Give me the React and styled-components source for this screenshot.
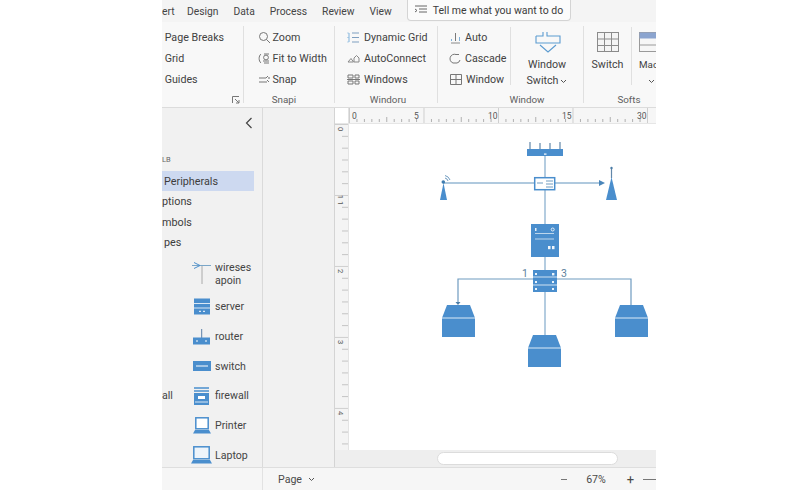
import React from "react";
import styled, { createGlobalStyle } from "styled-components";

const Global = createGlobalStyle`
  html, body { margin: 0; padding: 0; background: #fff; }
  body { font-family: Roboto, "Noto Sans", sans-serif; color: #3a3a3a; overflow: hidden; }
`;
const Frame = styled.div`
  margin-left: 162px; width: 494px; height: 490px; display: flex; flex-direction: column;
  overflow: hidden; background: #f5f5f5; font-size: 10.7px;
`;
const TabBar = styled.div`
  height: 22px; display: flex; align-items: center; gap: 15px; background: #f4f4f4; flex: none; font-size: 10.3px; color: #444;
`;
const TabStub = styled.span`
  width: 10px; flex: none;
`;
const TellBox = styled.div`
  height: 21px; align-self: flex-start; box-sizing: border-box; width: 164px; flex: none; display: flex; align-items: center; gap: 6px;
  padding-left: 7px; background: #fbfbfb; border: 1px solid #d4d4d4; border-top: none; border-radius: 0 0 4px 4px; font-size: 10.5px; white-space: nowrap; color: #3c3c3c;
  svg { flex: none; }
`;
const Ribbon = styled.div`
  height: 86px; flex: none; display: flex; background: #f8f8f8; border-bottom: 1px solid #dcdcdc; box-sizing: border-box; overflow: hidden;
`;
const Group = styled.div`
  width: ${p => p.$w}px; height: 77px; flex: none; display: flex; flex-direction: column; box-sizing: border-box; margin-top: 4px;
  border-right: ${p => (p.$last ? "none" : "1px solid #e0e0e0")};
  padding-left: ${p => p.$pad || 0}px;
`;
const GroupBody = styled.div`
  height: 64px; flex: none; display: flex; padding-top: 1px; box-sizing: border-box;
`;
const Stack = styled.div`
  display: flex; flex-direction: column; width: ${p => (p.$w ? p.$w + "px" : "auto")}; flex: none;
`;
const ToolRow = styled.div`
  height: 21px; flex: none; display: flex; align-items: center; gap: ${p => p.$gap ?? 3}px; white-space: nowrap; color: #424242;
  svg { flex: none; }
`;
const GroupLabel = styled.div`
  height: 17px; flex: none; margin-top: 1px; display: flex; align-items: center; justify-content: ${p => p.$end ? "flex-end" : "center"};
  padding-left: ${p => p.$pad || 0}px; padding-right: ${p => p.$end ? 3 : p.$padR || 0}px; font-size: 9.8px; color: #606060;
`;
const BigDivider = styled.div`
  width: 1px; height: 58px; background: #e0e0e0; flex: none;
`;
const BigButton = styled.div`
  display: flex; flex-direction: column; align-items: ${p => p.$start ? "flex-start" : "center"}; width: ${p => p.$w}px; flex: none; white-space: nowrap; color: #424242;
  padding-left: ${p => p.$pad || 0}px;
  svg { display: block; }
`;
const BigIcon = styled.div`
  height: 27px; flex: none; display: flex; align-items: center; justify-content: center; margin: 1px 0 2px; padding-left: ${p => p.$pad || 0}px;
`;
const BigText = styled.div`
  height: 16px; flex: none; line-height: 16px; display: flex; align-items: center; gap: 2px; padding-left: ${p => p.$pad || 0}px;
  font-size: ${p => p.$tight ? "9.8px" : "inherit"};
`;
const Main = styled.div`
  flex: 1; min-height: 0; display: flex; border-bottom: 1px solid #dedede;
`;
const Sidebar = styled.aside`
  width: 101px; flex: none; box-sizing: border-box; border-right: 1px solid #dadada; background: #f1f1f1; overflow: hidden; display: flex; flex-direction: column;
`;
const SideHead = styled.div`
  height: 44px; flex: none; display: flex; justify-content: flex-end; align-items: flex-start; padding: 9px 9px 0 0; box-sizing: border-box;
`;
const SectionCaption = styled.div`
  height: 16px; line-height: 16px; font-size: 7.5px; color: #666; flex: none;
`;
const NavRow = styled.div`
  height: ${p => (p.$active ? 20 : 20.5)}px; line-height: 22px; width: 92px; flex: none; font-size: 10.8px; white-space: nowrap; padding-left: ${p => p.$in || 0}px; box-sizing: border-box;
  background: ${p => (p.$active ? "#cdd9f0" : "transparent")}; color: #3d3d3d;
  margin-top: ${p => p.$top || 0}px;
`;
const ShapeList = styled.div`
  display: flex; flex-direction: column; margin-top: 3.5px;
`;
const ShapeRow = styled.div`
  height: ${p => p.$h || 29.7}px; flex: none; display: grid; grid-template-columns: 26px 27px 1fr; align-items: center; font-size: 10.6px; color: #444; line-height: 13px;
`;
const ShapeIcon = styled.div`
  display: flex; justify-content: center; align-items: center; grid-column: 2;
`;
const Pane = styled.div`
  width: 71px; flex: none; background: #f1f1f1; border-right: 1px solid #d4d4d4;
`;
const Work = styled.div`
  flex: 1; min-width: 0; display: flex; flex-direction: column;
`;
const TopRulerRow = styled.div`
  height: 16px; box-sizing: border-box; flex: none; display: flex; background: #f6f6f6; border-bottom: 1px solid #e6e6e6; overflow: hidden;
`;
const Corner = styled.div`
  width: 14px; flex: none; background: #fff; border-right: 1px solid #e2e2e2; box-sizing: border-box;
`;
const CanvasRow = styled.div`
  flex: 1; min-height: 0; display: flex;
`;
const LeftRuler = styled.div`
  width: 14px; flex: none; background: #f4f4f4; border-right: 1px solid #e4e4e4; box-sizing: border-box; overflow: hidden;
`;
const Page = styled.div`
  flex: 1; background: #fff; overflow: hidden;
`;
const ScrollTrack = styled.div`
  height: 17px; flex: none; background: #eeeeee; display: flex; align-items: center; padding-left: 102px;
`;
const ScrollThumb = styled.div`
  width: 181px; height: 13px; background: #fff; border: 1px solid #dcdcdc; border-radius: 7px; box-sizing: border-box;
`;
const StatusBar = styled.div`
  height: 22px; flex: none; display: flex; align-items: center; background: #f6f6f6; font-size: 10.6px; color: #4a4a4a;
`;
const StatusSpacer = styled.div`
  width: 100px; height: 100%; border-right: 1px solid #e2e2e2; flex: none;
`;
const PageMenu = styled.div`
  margin-left: 15px; display: flex; align-items: center; gap: 6px; width: 283px; flex: none;
`;
const Zoomer = styled.div`
  display: flex; align-items: center; white-space: nowrap;
`;
const ZoomBar = styled.span`
  width: ${p => p.$w}px; height: 1px; background: #777; flex: none; margin-left: ${p => p.$ml || 0}px;
`;
const ZoomValue = styled.span`
  width: 30px; text-align: center; margin: 0 15px 0 14px;
`;
const PlusSign = styled.span`
  font-size: 13px; width: 9px; text-align: center;
`;
const Line = ({ d, c = "#8a8a8a", w = 1 }) => <path d={d} fill="none" stroke={c} strokeWidth={w} />;

const I = ({ children, w = 13, h = 13 }) => <svg width={w} height={h} viewBox={`0 0 ${w} ${h}`}>{children}</svg>;
const ZoomIc = () => <I><circle cx="5.5" cy="5.5" r="4" fill="none" stroke="#777" /><Line d="M8.5 8.5L12 12" c="#777" /></I>;
const FitIc = () => <I><Line d="M3 2C0.5 4 0.5 9 3 11" c="#777" /><Line d="M6 2h5M6 11h5" c="#777" /><circle cx="8" cy="5.5" r="2.4" fill="none" stroke="#777" /><Line d="M5 9h6" c="#777" /></I>;
const SnapIc = () => <I><Line d="M1 5h7l2-2M1 9h8M9 7l2 2" c="#777" /><circle cx="11" cy="5" r="1" fill="#999" /></I>;
const GridIc = () => <I><Line d="M2 2v9" c="#7fb2dc" /><Line d="M5 2h7M5 6.5h7M5 11h7" c="#7f9fc0" /><Line d="M0.5 2h1M0.5 6.5h1M0.5 11h1" c="#7fb2dc" /></I>;
const ConnectIc = () => <I><path d="M1 10L4 6.5L6.5 10Z" fill="none" stroke="#888" /><path d="M7 10V6L9.5 3.5L12 6V10Z" fill="none" stroke="#888" /></I>;
const WindowsIc = () => <I><Line d="M1 2h5v3H1zM8 2h4v3H8zM1 8h5v3H1zM8 8h4v3H8zM0 6.5h13" c="#777" /></I>;
const AutoIc = () => <I><Line d="M2 12h9" c="#8a8a8a" /><Line d="M6.5 2v8" c="#7a7a7a" /><Line d="M2.5 8v2M10.5 6v4" c="#7fb2dc" /></I>;
const CascadeIc = () => <I><path d="M10 2.5H7A4.5 4.5 0 0 0 4 11H8A4 4 0 0 0 11 8" fill="none" stroke="#777" /></I>;
const WinIc = () => <I w={14}><Line d="M1.5 1.5h11v10h-11zM7 1.5v5M1.5 6.5h11M7 6.5v5" c="#777" /></I>;
const Chev = ({ c = "#555" }) => <svg width="7" height="5" viewBox="0 0 7 5"><Line d="M1 1l2.5 2.5L6 1" c={c} /></svg>;
const WindowBig = () => (
  <svg width="28" height="24" viewBox="0 0 28 24">
    <path d="M1 6H8V2M12 2V6H25V13H1V6" fill="none" stroke="#5b9bd0" strokeWidth="1.1" />
    <path d="M5 15L13 22L21 15" fill="none" stroke="#5b9bd0" strokeWidth="1.1" />
  </svg>
);
const TableBig = () => (
  <svg width="22" height="20" viewBox="0 0 22 20">
    <rect x=".5" y=".5" width="21" height="19" fill="#f4f4f4" stroke="#8b8b8b" />
    <path d="M.5 7H21.5M.5 13.5H21.5M7.5 .5V19.5M14.5 .5V19.5" stroke="#8b8b8b" fill="none" />
  </svg>
);
const TableHead = () => (
  <svg width="24" height="20" viewBox="0 0 24 20">
    <rect x=".5" y=".5" width="23" height="19" fill="#f6f6f6" stroke="#9a9a9a" />
    <rect x=".5" y=".5" width="23" height="6" fill="#8ba4cf" />
    <path d="M.5 13H23.5" stroke="#9a9a9a" />
  </svg>
);

const B = "#4a8ecd";
const ServerS = () => <svg width="18" height="17" viewBox="0 0 18 17"><rect width="16" height="16" x="1" y=".5" fill={B} /><path d="M1 5.5h16M1 10h16" stroke="#fff" strokeWidth=".8" /><path d="M6 13.3h2M10 13.3h2" stroke="#fff" /></svg>;
const RouterS = () => <svg width="20" height="16" viewBox="0 0 20 16"><path d="M9.7 0v9" stroke="#5b7fa8" /><rect y="8.5" x="1" width="17" height="7" fill={B} /><path d="M4 12h2M13 12h2" stroke="#fff" /></svg>;
const SwitchS = () => <svg width="20" height="10" viewBox="0 0 20 10"><rect x="1" width="18" height="10" fill={B} /><path d="M4 5h12" stroke="#fff" /></svg>;
const FirewallS = () => <svg width="17" height="18" viewBox="0 0 17 18"><path d="M1 1h15M1 4h15" stroke={B} strokeWidth="1.5" /><rect x="1" y="6" width="15" height="12" fill={B} /><rect x="5" y="9" width="7" height="3" fill="#fff" /><path d="M2 15h13" stroke="#fff" strokeWidth=".8" /></svg>;
const PrinterS = () => <svg width="18" height="17" viewBox="0 0 18 17"><rect x="2.8" y=".8" width="12.4" height="11" fill="#fff" stroke={B} strokeWidth="1.5" /><path d="M0 16.5L2 13H16L18 16.5Z" fill={B} /></svg>;
const LaptopS = () => <svg width="21" height="18" viewBox="0 0 21 18"><rect x="2.8" y=".8" width="15.4" height="12" fill="#eef4fa" stroke={B} strokeWidth="1.5" /><path d="M0 17.5L2 14H19L21 17.5Z" fill={B} /></svg>;
const ApS = () => <svg width="20" height="24" viewBox="0 0 20 24"><path d="M0 3.5H19" stroke="#7aa6c8" /><path d="M2 0.5L8 3.5L2 6.5" fill="none" stroke="#4a8ecd" /><path d="M10 4V22" stroke="#aaa" /></svg>;

const TopRuler = () => {
  const ticks = [];
  for (let i = 0; i < 41; i++) {
    const x = i * 7.45;
    const major = i % 10 === 0;
    const mid = i % 5 === 0;
    ticks.push(<path key={i} d={`M${x + .5} ${major ? 0 : mid ? 9 : 11}V${major ? 15 : 14}`} stroke={major ? "#cfcfcf" : "#b0b0b0"} />);
  }
  const labels = [["0", 3], ["5", 65], ["10", 139], ["15", 213], ["30", 288]];
  return (
    <svg width="307" height="15" viewBox="0 0 307 15">
      {ticks}
      {labels.map(([t, x]) => <text key={t} x={x} y="11" fontSize="8.5" fontFamily="Roboto" fill="#555">{t}</text>)}
    </svg>
  );
};
const LeftRulerDraw = () => {
  const ticks = [];
  for (let i = 0; i < 28; i++) {
    const y = i * 11.83 + .5;
    const major = i % 6 === 0;
    ticks.push(<path key={i} d={`M${major ? 0 : 7} ${y}H14`} stroke={major ? "#cfcfcf" : "#c4c4c4"} />);
  }
  const labels = [["0", 5], ["1 1", 76], ["2", 147], ["3", 218], ["4", 289]];
  return (
    <svg width="13" height="326" viewBox="0 0 13 326">
      {ticks}
      {labels.map(([t, y]) => <text key={t} transform={`translate(3 ${y}) rotate(90)`} textAnchor="middle" fontSize="7.5" fontFamily="Roboto" fill="#555">{t}</text>)}
    </svg>
  );
};

/* Diagram coordinates: page x-349, y-124 */
const X = (x) => x - 349;
const Y = (y) => y - 124;
const Cabinet = ({ x, y }) => (
  <g transform={`translate(${X(x)} ${Y(y)})`}>
    <path d="M5 0H28L33 13V32H0V13Z" fill={B} />
    <path d="M0 13H33" stroke="#dcebf7" strokeWidth="1" />
  </g>
);
const Diagram = () => (
  <svg width="307" height="326" viewBox="0 0 307 326" style={{ display: "block" }}>
    <g stroke="#94b7d3" strokeWidth="1.4" fill="none">
      <path d={`M${X(545)} ${Y(156)}V${Y(335)}`} />
      <path d={`M${X(443)} ${Y(183)}H${X(603)}`} />
    </g>
    <g stroke="#6f9bc0" strokeWidth="1.2" fill="none">
      <path d={`M${X(533)} ${Y(279)}H${X(458)}V${Y(304)}`} />
      <path d={`M${X(557)} ${Y(279)}H${X(631)}V${Y(305)}`} />
    </g>
    <path d={`M${X(455.5)} ${Y(302)}h5l-2.5 3z`} fill="#4d7ea8" />
    <path d={`M${X(599)} ${Y(180)}l6 3l-6 3z`} fill="#4a86ba" />
    <rect x={X(527)} y={Y(149)} width="36" height="7" fill={B} />
    <path d={`M${X(530)} ${Y(142)}V${Y(149)}M${X(540)} ${Y(143)}V${Y(149)}M${X(550)} ${Y(143)}V${Y(149)}M${X(560)} ${Y(142)}V${Y(149)}`} stroke="#6287a9" strokeWidth="1.2" />
    <rect x={X(544)} y={Y(153.5)} width="2.5" height="1.2" fill="#fff" />
    <rect x={X(534.7)} y={Y(177.7)} width="20" height="12" fill="#fff" stroke={B} strokeWidth="1.5" />
    <path d={`M${X(537)} ${Y(183)}H${X(543)}M${X(546)} ${Y(181)}H${X(553)}M${X(546)} ${Y(184)}H${X(553)}M${X(546)} ${Y(187)}H${X(553)}`} stroke="#6f9bc0" />
    <path d={`M${X(443.5)} ${Y(183)}L${X(447)} ${Y(200)}H${X(440)}Z`} fill={B} />
    <circle cx={X(443.3)} cy={Y(182)} r="1.8" fill="#3f7caf" />
    <path d={`M${X(445)} ${Y(178)}A4 4 0 0 1 ${X(448)} ${Y(181)}M${X(445)} ${Y(175.5)}A7 7 0 0 1 ${X(450)} ${Y(180)}`} stroke="#6f9bc0" fill="none" />
    <path d={`M${X(611.5)} ${Y(177)}L${X(617)} ${Y(200)}H${X(606)}Z`} fill={B} />
    <path d={`M${X(611.5)} ${Y(168)}V${Y(178)}`} stroke="#6287a9" strokeWidth="1.2" />
    <circle cx={X(611.5)} cy={Y(168)} r="1.2" fill="#4a7ca6" />
    <rect x={X(531)} y={Y(224)} width="28" height="33" fill={B} />
    <path d={`M${X(535)} ${Y(233.5)}H${X(554)}M${X(535)} ${Y(239)}H${X(554)}`} stroke="#bcd6ec" strokeWidth="1" />
    <rect x={X(535)} y={Y(228)} width="1.5" height="3" fill="#e6f0f9" />
    <circle cx={X(552.7)} cy={Y(229.5)} r="1.5" fill="none" stroke="#e6f0f9" />
    <rect x={X(548)} y={Y(246)} width="2.5" height="3.2" fill="#f1f6fb" />
    <rect x={X(552)} y={Y(246)} width="2.5" height="3.2" fill="#f1f6fb" />
    <rect x={X(533)} y={Y(270)} width="24" height="22" fill={B} />
    <path d={`M${X(533)} ${Y(277)}H${X(557)}M${X(533)} ${Y(285)}H${X(557)}`} stroke="#cfe2f2" />
    <g fill="#eaf3fb">
      <rect x={X(535)} y={Y(273)} width="2" height="2" />
      <rect x={X(552)} y={Y(273)} width="2.4" height="2.4" />
      <rect x={X(535)} y={Y(281)} width="2" height="2" />
      <rect x={X(552)} y={Y(281)} width="2" height="2" />
      <rect x={X(535)} y={Y(288)} width="2" height="2" />
      <rect x={X(552)} y={Y(288)} width="2" height="2" />
    </g>
    <Cabinet x={442} y={305} />
    <Cabinet x={528} y={335} />
    <Cabinet x={615} y={305} />
    <text x={X(522)} y={Y(277)} fontSize="10.5" fontFamily="Roboto" fill="#5d7f9c">1</text>
    <text x={X(561)} y={Y(277)} fontSize="10.5" fontFamily="Roboto" fill="#5d7f9c">3</text>
  </svg>
);

export default function App() {
  return (
    <>
      <Global />
      <Frame>
        <TabBar>
          <TabStub>ert</TabStub>
          <span>Design</span><span>Data</span><span>Process</span><span>Review</span><span>View</span>
          <TellBox>
            <svg width="12" height="10" viewBox="0 0 12 10"><Line d="M0 1h12M4 4h8M4 7h8" c="#666" /><Line d="M0 4l2 1.5L0 7" c="#666" /></svg>
            Tell me what you want to do
          </TellBox>
        </TabBar>
        <Ribbon>
          <Group $w={82}>
            <GroupBody>
              <Stack>
                <ToolRow>&nbsp;Page Breaks</ToolRow>
                <ToolRow>&nbsp;Grid</ToolRow>
                <ToolRow>&nbsp;Guides</ToolRow>
              </Stack>
            </GroupBody>
            <GroupLabel $end>
              <svg width="8" height="8" viewBox="0 0 8 8"><Line d="M.5 7V.5H7M3 3l4 4M7 4v3H4" c="#777" /></svg>
            </GroupLabel>
          </Group>
          <Group $w={91} $pad={14}>
            <GroupBody>
              <Stack>
                <ToolRow $gap={1.5}><ZoomIc />Zoom</ToolRow>
                <ToolRow $gap={1.5}><FitIc />Fit to Width</ToolRow>
                <ToolRow $gap={1.5}><SnapIc />Snap</ToolRow>
              </Stack>
            </GroupBody>
            <GroupLabel $padR={24}>Snapi</GroupLabel>
          </Group>
          <Group $w={103} $pad={12}>
            <GroupBody>
              <Stack>
                <ToolRow $gap={4}><GridIc />Dynamic Grid</ToolRow>
                <ToolRow $gap={4}><ConnectIc />AutoConnect</ToolRow>
                <ToolRow $gap={4}><WindowsIc />Windows</ToolRow>
              </Stack>
            </GroupBody>
            <GroupLabel $padR={8}>Windoru</GroupLabel>
          </Group>
          <Group $w={146} $pad={11}>
            <GroupBody>
              <Stack $w={61}>
                <ToolRow><AutoIc />Auto</ToolRow>
                <ToolRow><CascadeIc />Cascade</ToolRow>
                <ToolRow><WinIc />Window</ToolRow>
              </Stack>
              <BigDivider />
              <BigButton $w={72}>
                <BigIcon $pad={4}><WindowBig /></BigIcon>
                <BigText>Window</BigText>
                <BigText>Switch <Chev /></BigText>
              </BigButton>
            </GroupBody>
            <GroupLabel $pad={22}>Window</GroupLabel>
          </Group>
          <Group $w={72} $last>
            <GroupBody>
              <BigButton $w={47}>
                <BigIcon><TableBig /></BigIcon>
                <BigText>Switch</BigText>
              </BigButton>
              <BigDivider />
              <BigButton $w={24} $start $pad={7}>
                <BigIcon><TableHead /></BigIcon>
                <BigText $tight>Mac</BigText>
                <BigText $pad={9}><Chev /></BigText>
              </BigButton>
            </GroupBody>
            <GroupLabel $pad={18}>Softs</GroupLabel>
          </Group>
        </Ribbon>
        <Main>
          <Sidebar>
            <SideHead>
              <svg width="8" height="12" viewBox="0 0 8 12"><Line d="M6.5 1L1.5 6l5 5" c="#444" w={1.2} /></svg>
            </SideHead>
            <SectionCaption>LB</SectionCaption>
            <NavRow $active $top={3} $in={2}>Peripherals</NavRow>
            <NavRow>ptions</NavRow>
            <NavRow>mbols</NavRow>
            <NavRow $in={2}>pes</NavRow>
            <ShapeList>
              <ShapeRow $h={36}><ShapeIcon><ApS /></ShapeIcon><span>wireses<br />apoin</span></ShapeRow>
              <ShapeRow><ShapeIcon><ServerS /></ShapeIcon><span>server</span></ShapeRow>
              <ShapeRow><ShapeIcon><RouterS /></ShapeIcon><span>router</span></ShapeRow>
              <ShapeRow><ShapeIcon><SwitchS /></ShapeIcon><span>switch</span></ShapeRow>
              <ShapeRow><span>all</span><ShapeIcon><FirewallS /></ShapeIcon><span>firewall</span></ShapeRow>
              <ShapeRow><ShapeIcon><PrinterS /></ShapeIcon><span>Printer</span></ShapeRow>
              <ShapeRow><ShapeIcon><LaptopS /></ShapeIcon><span>Laptop</span></ShapeRow>
            </ShapeList>
          </Sidebar>
          <Pane />
          <Work>
            <TopRulerRow><Corner /><TopRuler /></TopRulerRow>
            <CanvasRow>
              <LeftRuler><LeftRulerDraw /></LeftRuler>
              <Page><Diagram /></Page>
            </CanvasRow>
            <ScrollTrack><ScrollThumb /></ScrollTrack>
          </Work>
        </Main>
        <StatusBar>
          <StatusSpacer />
          <PageMenu>Page <Chev /></PageMenu>
          <Zoomer>
            <ZoomBar $w={6} />
            <ZoomValue>67%</ZoomValue>
            <PlusSign>+</PlusSign>
            <ZoomBar $w={13} $ml={8} />
          </Zoomer>
        </StatusBar>
      </Frame>
    </>
  );
}
